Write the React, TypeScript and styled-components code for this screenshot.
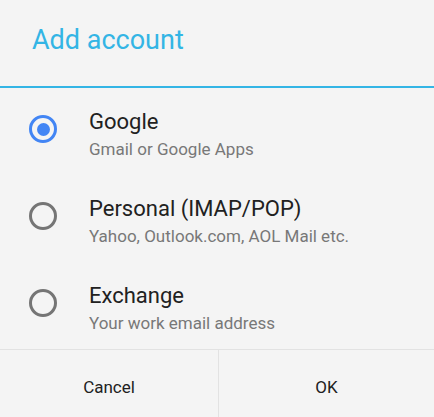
import React, { useState } from "react";
import styled, { createGlobalStyle } from "styled-components";

const Global = createGlobalStyle`
  html, body {
    margin: 0;
    padding: 0;
    background: #f4f4f4;
    overflow: hidden;
  }
  * { box-sizing: border-box; }
`;

const Dialog = styled.div`
  width: 434px;
  background: #f4f4f4;
  font-family: Roboto, "Noto Sans", sans-serif;
  display: flex;
  flex-direction: column;
`;

const Header = styled.div`
  height: 88px;
  padding: 23px 0 0 32px;
  border-bottom: 2px solid #33b5e5;
`;

const Title = styled.h1`
  margin: 0;
  font-size: 27px;
  line-height: 34px;
  font-weight: 400;
  color: #33b5e5;
`;

const List = styled.div`
  display: flex;
  flex-direction: column;
`;

const Row = styled.label`
  height: 87px;
  display: flex;
  align-items: flex-start;
  padding: 21px 0 0 29px;
  gap: 32px;
  cursor: pointer;
`;

const Radio = styled.span<{ $checked: boolean }>`
  flex: none;
  width: 28px;
  height: 28px;
  margin-top: 6px;
  border-radius: 50%;
  border: 3px solid ${(p) => (p.$checked ? "#4285f4" : "#757575")};
  display: flex;
  align-items: center;
  justify-content: center;
  &::after {
    content: "";
    width: 13px;
    height: 13px;
    border-radius: 50%;
    background: #4285f4;
    display: ${(p) => (p.$checked ? "block" : "none")};
  }
`;

const Texts = styled.div`
  display: flex;
  flex-direction: column;
`;

const Name = styled.div`
  font-size: 22px;
  line-height: 26px;
  color: #212121;
`;

const Sub = styled.div`
  margin-top: 3px;
  font-size: 17px;
  line-height: 22px;
  color: #787878;
`;

const Footer = styled.div`
  display: grid;
  grid-template-columns: 218px 1fr;
  border-top: 1px solid #e2e2e2;
  height: 74px;
`;

const Button = styled.button<{ $divider?: boolean }>`
  background: transparent;
  border: none;
  border-left: ${(p) => (p.$divider ? "1px solid #e2e2e2" : "none")};
  font-family: Roboto, "Noto Sans", sans-serif;
  font-size: 17px;
  color: #212121;
  padding: 0;
  cursor: pointer;
`;

const options = [
  { id: "google", name: "Google", sub: "Gmail or Google Apps" },
  { id: "personal", name: "Personal (IMAP/POP)", sub: "Yahoo, Outlook.com, AOL Mail etc." },
  { id: "exchange", name: "Exchange", sub: "Your work email address" },
];

export default function App() {
  const [selected, setSelected] = useState("google");
  return (
    <>
      <Global />
      <Dialog>
        <Header>
          <Title>Add account</Title>
        </Header>
        <List>
          {options.map((o) => (
            <Row key={o.id} onClick={() => setSelected(o.id)}>
              <Radio $checked={selected === o.id} />
              <Texts>
                <Name>{o.name}</Name>
                <Sub>{o.sub}</Sub>
              </Texts>
            </Row>
          ))}
        </List>
        <Footer>
          <Button>Cancel</Button>
          <Button $divider>OK</Button>
        </Footer>
      </Dialog>
    </>
  );
}
